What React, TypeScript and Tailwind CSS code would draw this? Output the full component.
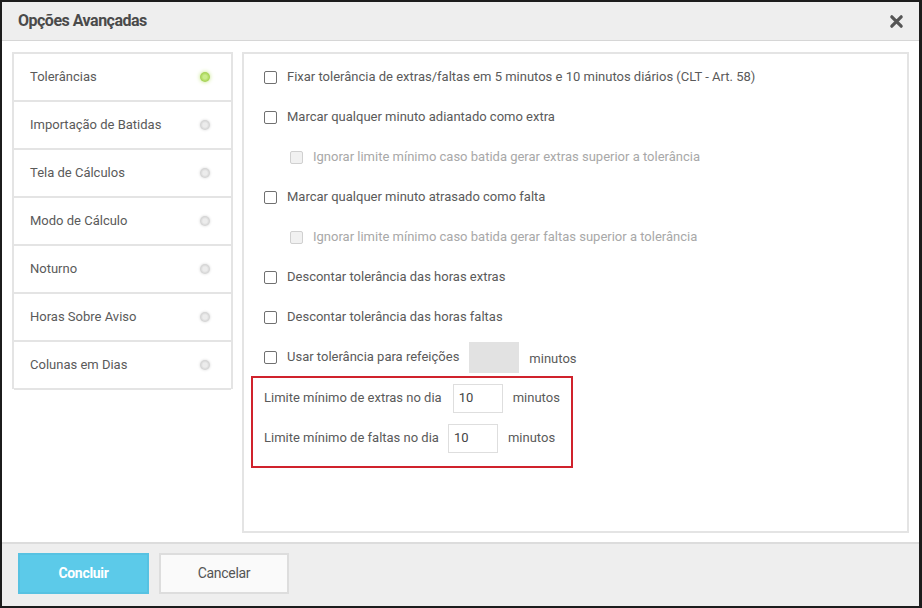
import React from 'react';

const FONT = { fontFamily: 'Roboto, "Noto Sans", Arial, sans-serif' };

const MENU = [
  'Tolerâncias',
  'Importação de Batidas',
  'Tela de Cálculos',
  'Modo de Cálculo',
  'Noturno',
  'Horas Sobre Aviso',
  'Colunas em Dias',
];

function Check({ disabled }: { disabled?: boolean }) {
  return (
    <span
      className={`inline-block h-[13px] w-[13px] shrink-0 rounded-[2px] border ${
        disabled ? 'border-[#d0d0d0] bg-[#f1f1f1]' : 'border-[#707070] bg-white'
      }`}
    />
  );
}

function CheckRow({ label, sub, disabled }: { label: string; sub?: boolean; disabled?: boolean }) {
  return (
    <div className={`flex h-10 items-center gap-[10px] ${sub ? 'pl-[26px]' : ''}`}>
      <Check disabled={disabled} />
      <span className={disabled ? 'text-[#a8a8a8]' : 'text-[#5a5a5a]'}>{label}</span>
    </div>
  );
}

export default function App() {
  return (
    <div
      style={FONT}
      className="flex h-[608px] w-[922px] flex-col border-2 border-r-[3px] border-[#1c1c1c] bg-white text-[13px] text-[#5a5a5a]"
    >
      <div className="flex h-[39px] shrink-0 items-center justify-between border-b border-[#d6d6d6] bg-[#eeeeee] pl-4 pr-[15px]">
        <span className="text-[16px] font-bold tracking-[-0.5px] text-[#4a4a4a]">Opções Avançadas</span>
        <svg width="15" height="15" viewBox="0 0 16 16">
          <path d="M3 3l10 10M13 3L3 13" stroke="#555" strokeWidth="3.4" strokeLinecap="round" />
        </svg>
      </div>

      <div className="flex min-h-0 flex-1 gap-[9px] pb-[9px] pl-[10px] pr-[10px] pt-[11px]">
        <div className="h-[337px] w-[221px] shrink-0 border-2 border-b-0 border-[#e4e4e4]">
          {MENU.map((m, i) => (
            <div
              key={m}
              className="flex h-12 items-center justify-between border-b-2 border-[#e4e4e4] pl-4 pr-[21px]"
            >
              <span>{m}</span>
              {i === 0 ? (
                <span className="h-[10px] w-[10px] rounded-full bg-[radial-gradient(circle,#c9ec8a_25%,#9ccb45_75%)] shadow-[0_0_4px_#c0e37e]" />
              ) : (
                <span className="h-[10px] w-[10px] rounded-full bg-[radial-gradient(circle,#ececec_30%,#c9c9c9_80%)] shadow-[0_0_3px_#d6d6d6]" />
              )}
            </div>
          ))}
        </div>

        <div className="flex-1 border-2 border-[#e4e4e4] pl-5 pt-[3px]">
          <CheckRow label="Fixar tolerância de extras/faltas em 5 minutos e 10 minutos diários (CLT - Art. 58)" />
          <CheckRow label="Marcar qualquer minuto adiantado como extra" />
          <CheckRow sub disabled label="Ignorar limite mínimo caso batida gerar extras superior a tolerância" />
          <CheckRow label="Marcar qualquer minuto atrasado como falta" />
          <CheckRow sub disabled label="Ignorar limite mínimo caso batida gerar faltas superior a tolerância" />
          <CheckRow label="Descontar tolerância das horas extras" />
          <CheckRow label="Descontar tolerância das horas faltas" />
          <div className="flex h-10 items-center">
            <Check />
            <span className="ml-[10px]">Usar tolerância para refeições</span>
            <span className="ml-[10px] h-[31px] w-[50px] bg-[#e2e2e2]" />
            <span className="ml-[10px] mt-[3px]">minutos</span>
          </div>

          <div className="-ml-[13px] -mt-px w-[322px] border-2 border-[#d0222c] pb-2 pl-[11px]">
            <div className="flex h-10 items-center">
              <span>Limite mínimo de extras no dia</span>
              <span className="ml-[11px] flex h-[29px] w-[50px] items-center border border-[#dedede] pl-[5px] text-[#444]">
                10
              </span>
              <span className="ml-[10px]">minutos</span>
            </div>
            <div className="flex h-10 items-center">
              <span>Limite mínimo de faltas no dia</span>
              <span className="ml-[9px] flex h-[29px] w-[50px] items-center border border-[#dedede] pl-[5px] text-[#444]">
                10
              </span>
              <span className="ml-[10px]">minutos</span>
            </div>
          </div>
        </div>
      </div>

      <div className="flex shrink-0 gap-[10px] border-t-2 border-[#dcdcdc] bg-[#eeeeee] pb-[12px] pl-4 pt-[9px]">
        <button className="h-[41px] w-[131px] border-2 border-[#57c2e2] bg-[#5ccae9] text-[14px] font-bold tracking-[-0.3px] text-white">
          Concluir
        </button>
        <button className="h-[41px] w-[130px] border-2 border-[#dddddd] bg-[#fafafa] text-[14px] tracking-[-0.3px] text-[#555]">
          Cancelar
        </button>
      </div>
    </div>
  );
}
